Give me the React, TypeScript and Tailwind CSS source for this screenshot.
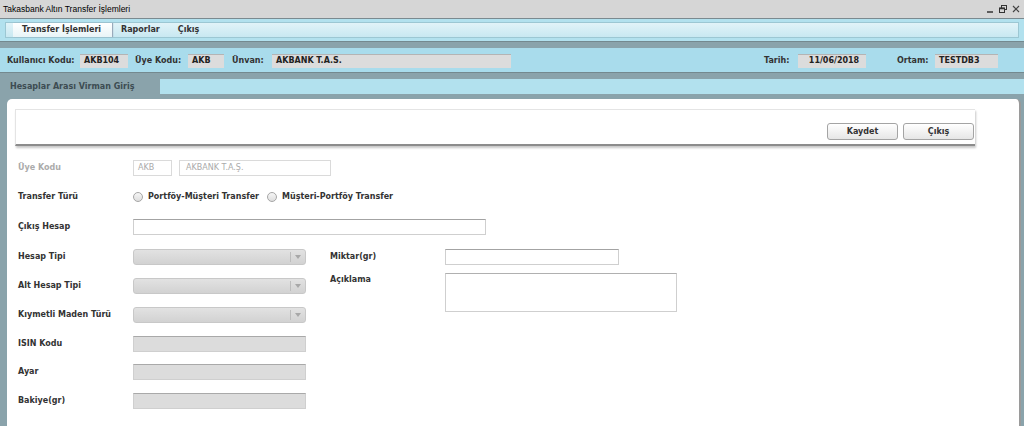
import React from 'react';

const font = { fontFamily: '"DejaVu Sans", Verdana, sans-serif' };

const Select = () => (
  <div className="flex h-[16px] w-[173px] items-center justify-end rounded-[3px] border border-[#c8c8c8] bg-gradient-to-b from-[#e2e2e2] to-[#d2d2d2] pr-[4px]">
    <div className="mr-[4px] h-[10px] w-px bg-[#bdbdbd]" />
    <svg width="6" height="4" viewBox="0 0 6 4">
      <path d="M0 0 L6 0 L3 4 Z" fill="#a8a8a8" />
    </svg>
  </div>
);

const GrayBox = () => (
  <div className="h-[16px] w-[173px] border border-[#cfcfcf] border-t-[#a9a9a9] bg-[#dcdcdc]" />
);

const Radio = ({ label }: { label: string }) => (
  <div className="flex items-center">
    <div className="h-[10px] w-[10px] rounded-full border border-[#a6a6a6] bg-gradient-to-b from-[#f6f6f6] to-[#dedede]" />
    <span className="ml-[5px] text-[8px] font-bold text-[#333]">{label}</span>
  </div>
);

const Row = ({ label, h, children, muted }: { label: string; h: string; children: React.ReactNode; muted?: boolean }) => (
  <div className={`flex items-center ${h}`}>
    <div className={`w-[115px] text-[8px] font-bold ${muted ? 'text-[#ababab]' : 'text-[#333]'}`}>{label}</div>
    {children}
  </div>
);

const InfoBox = ({ w, value }: { w: string; value: string }) => (
  <div className={`flex h-[14px] items-center border-t border-[#b4b4b4] bg-[#dcdcdc] pl-[4px] text-[8px] font-bold text-[#222] ${w}`}>
    {value}
  </div>
);

export default function App() {
  return (
    <div className="flex h-[426px] w-[1024px] flex-col overflow-hidden bg-[#8aa3ab]" style={font}>
      {/* title bar */}
      <div className="flex h-[19px] items-center justify-between border-b border-[#7b8a90] bg-[#d6d6d6] pl-[3px] pr-[4px]">
        <span className="text-[8.5px] text-black" style={{ fontFamily: '"Liberation Sans", Arial, sans-serif' }}>
          Takasbank Altın Transfer İşlemleri
        </span>
        <div className="flex items-center gap-[5px]">
          <svg width="8" height="8" viewBox="0 0 8 8">
            <path d="M1 7 H7" stroke="#333" strokeWidth="1.5" />
          </svg>
          <svg width="8" height="8" viewBox="0 0 8 8">
            <rect x="2.5" y="0.5" width="5" height="4" fill="none" stroke="#333" strokeWidth="1" />
            <rect x="0.5" y="3" width="5" height="4.5" fill="#d6d6d6" stroke="#333" strokeWidth="1" />
            <path d="M0.5 3.5 H5.5" stroke="#333" strokeWidth="1.5" />
          </svg>
          <svg width="8" height="8" viewBox="0 0 8 8">
            <path d="M1 1 L7 7 M7 1 L1 7" stroke="#444" strokeWidth="1.2" />
          </svg>
        </div>
      </div>

      {/* menu band */}
      <div className="h-[22px] bg-[#b2e1ee] px-[5px] pt-[3px]">
        <div className="flex h-[16px] items-center border border-[#9cc7d3] bg-gradient-to-b from-[#e1f3f8] to-[#c8e8f1] pl-[7px]">
          <div className="flex h-[14px] w-[99px] items-center bg-gradient-to-b from-[#ffffff] to-[#e8f4f7] pl-[9px] text-[8px] font-bold text-[#333] shadow-[1px_0_1px_#9ab]">
            Transfer İşlemleri
          </div>
          <span className="ml-[9px] text-[8px] font-bold text-[#333]">Raporlar</span>
          <span className="ml-[18px] text-[8px] font-bold text-[#333]">Çıkış</span>
        </div>
      </div>

      <div className="h-[7px] border-t border-[#74898f] bg-[#8aa3ab]" />

      {/* info band */}
      <div className="flex h-[24px] items-center bg-[#a9dcec] pl-[7px] pt-[1px] text-[8px] font-bold text-[#333]">
        <span className="w-[73px]">Kullanıcı Kodu:</span>
        <InfoBox w="w-[48px]" value="AKB104" />
        <span className="ml-[7px] w-[53px]">Üye Kodu:</span>
        <InfoBox w="w-[36px]" value="AKB" />
        <span className="ml-[8px] w-[40px]">Ünvan:</span>
        <InfoBox w="w-[239px]" value="AKBANK T.A.S." />
        <span className="ml-[253px] w-[34px]">Tarih:</span>
        <InfoBox w="w-[68px] justify-center pl-0" value="11/06/2018" />
        <span className="ml-[31px] w-[38px]">Ortam:</span>
        <InfoBox w="w-[63px]" value="TESTDB3" />
      </div>

      <div className="h-[5px] border-t border-[#74898f] bg-[#8aa3ab]" />

      {/* tab row */}
      <div className="flex h-[18px] items-center">
        <div className="w-[160px] pl-[10px] pt-[1px] text-[8px] font-bold text-[#3d4c52]">Hesaplar Arası Virman Giriş</div>
        <div className="h-[15px] flex-1 bg-[#b2e1ee]" />
      </div>

      {/* main panel */}
      <div className="flex-1 pl-[7px] pr-[3px] pt-[4px]">
        <div className="h-full rounded-t-[5px] border-r-2 border-[#9a9a9a] bg-white pl-[8px] pt-[10px]">
          <div className="flex h-[37px] w-[960px] items-end justify-end gap-[5px] border-l border-t border-[#e4e4e4] border-b-2 border-b-[#8c8c8c] pb-[4px] pr-[1px] shadow-[1px_2px_2px_#c8c8c8]">
            <button className="h-[17px] w-[71px] rounded-[3px] border border-[#a4a4a4] bg-gradient-to-b from-white to-[#e6e6e6] text-[8px] font-bold text-[#333]">
              Kaydet
            </button>
            <button className="h-[17px] w-[71px] rounded-[3px] border border-[#a4a4a4] bg-gradient-to-b from-white to-[#e6e6e6] text-[8px] font-bold text-[#333]">
              Çıkış
            </button>
          </div>

          <div className="pl-[3px] pt-[7px]">
            <Row label="Üye Kodu" h="h-[29px]" muted>
              <div className="flex h-[16px] w-[39px] items-center border border-[#dadada] pl-[4px] text-[8px] text-[#aaa]">AKB</div>
              <div className="ml-[7px] flex h-[16px] w-[152px] items-center border border-[#dadada] pl-[6px] text-[8px] text-[#aaa]">AKBANK T.A.Ş.</div>
            </Row>
            <Row label="Transfer Türü" h="h-[30px]">
              <Radio label="Portföy-Müşteri Transfer" />
              <div className="ml-[8px]">
                <Radio label="Müşteri-Portföy Transfer" />
              </div>
            </Row>
            <Row label="Çıkış Hesap" h="h-[30px]">
              <div className="h-[16px] w-[353px] border border-[#cfcfcf] border-t-[#a3a3a3]" />
            </Row>

            <div className="flex">
              <div className="w-[312px]">
                <Row label="Hesap Tipi" h="h-[29px]">
                  <Select />
                </Row>
                <Row label="Alt Hesap Tipi" h="h-[29px]">
                  <Select />
                </Row>
                <Row label="Kıymetli Maden Türü" h="h-[29px]">
                  <Select />
                </Row>
                <Row label="ISIN Kodu" h="h-[29px]">
                  <GrayBox />
                </Row>
                <Row label="Ayar" h="h-[28px]">
                  <GrayBox />
                </Row>
                <Row label="Bakiye(gr)" h="h-[29px]">
                  <GrayBox />
                </Row>
              </div>
              <div>
                <Row label="Miktar(gr)" h="h-[29px]">
                  <div className="h-[16px] w-[174px] border border-[#cfcfcf] border-t-[#a3a3a3]" />
                </Row>
                <div className="flex items-start">
                  <div className="w-[115px] pt-[3px] text-[8px] font-bold text-[#333]">Açıklama</div>
                  <div className="mt-[2px] h-[39px] w-[232px] border border-[#cfcfcf] border-t-[#b0b0b0]" />
                </div>
              </div>
            </div>
          </div>
        </div>
      </div>
    </div>
  );
}
